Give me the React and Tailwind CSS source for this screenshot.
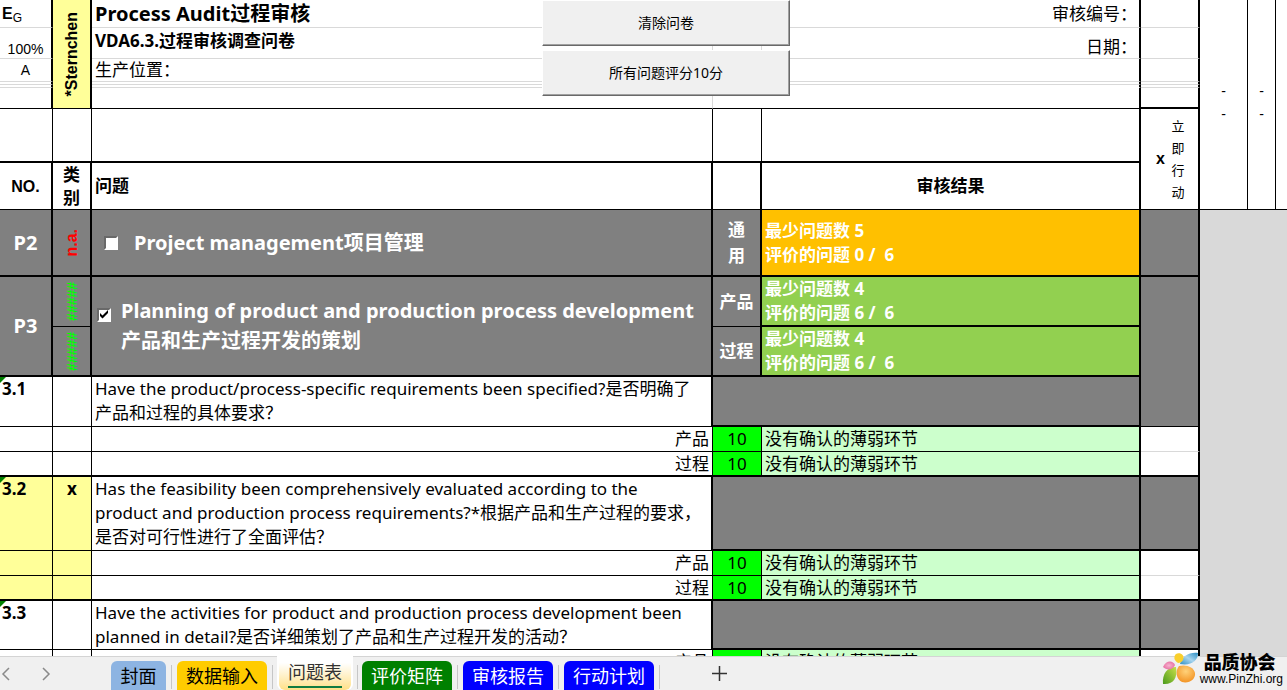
import React, { useState } from 'react';

const latin = "font-['Liberation_Sans','Noto_Sans_CJK_SC',sans-serif]";

const dark = 'bg-[#808080] text-white border-black';

const sections = [
  {
    no: '3.1',
    star: false,
    height: 'h-[50px]',
    lines: ['Have the product/process-specific requirements been specified?是否明确了', '产品和过程的具体要求？'],
  },
  {
    no: '3.2',
    star: true,
    height: 'h-[74px]',
    lines: [
      'Has the feasibility been comprehensively evaluated according to the',
      'product and production process requirements?*根据产品和生产过程的要求，',
      '是否对可行性进行了全面评估？',
    ],
  },
  {
    no: '3.3',
    star: false,
    height: 'h-[49px]',
    lines: ['Have the activities for product and production process development been', 'planned in detail?是否详细策划了产品和生产过程开发的活动？'],
  },
];

const tabs = [
  { label: '封面', className: 'bg-[#8db4e2] text-black' },
  { label: '数据输入', className: 'bg-[#ffcc00] text-black' },
  { label: '问题表' },
  { label: '评价矩阵', className: 'bg-[#008000] text-white' },
  { label: '审核报告', className: 'bg-[#0000ff] text-white' },
  { label: '行动计划', className: 'bg-[#0000ff] text-white' },
];

const SheetButton = ({ children }) => (
  <button
    type="button"
    className="h-[46px] w-full border-t border-l border-r border-b border-t-white border-l-white border-r-[#696969] border-b-[#696969] bg-[#f0f0f0] text-sm text-black shadow-[inset_-1px_-1px_0_#a0a0a0]"
  >
    {children}
  </button>
);

const CheckBox = ({ label, defaultChecked }) => {
  const [checked, setChecked] = useState(defaultChecked);
  return (
    <span className="relative block size-[14px] shrink-0">
      <input
        type="checkbox"
        aria-label={label}
        checked={checked}
        onChange={() => setChecked(!checked)}
        className="block size-[14px] appearance-none border-2 border-t-[#696969] border-r-white border-b-white border-l-[#696969] bg-white"
      />
      {checked && (
        <svg className="pointer-events-none absolute inset-0" viewBox="0 0 14 14" fill="#000">
          <path d="M3 5v3l2.500 2.500L11 5V2L5.500 7.500z" />
        </svg>
      )}
    </span>
  );
};

const Vertical = ({ className, children }) => (
  <div className="flex items-center justify-center">
    <span className={`leading-4 font-bold whitespace-nowrap [writing-mode:vertical-rl] ${latin} ${className}`}>
      {children}
    </span>
  </div>
);

// row of light grid lines above the frozen header
const GridRow = ({ height, first, no, title, right, noLine }) => (
  <tr className={height}>
    <td className={`border-r-2 border-b border-r-black border-b-[#d9d9d9] ${latin}`}>{no}</td>
    {first && (
      <td rowSpan={6} className="border-r-2 border-b border-black bg-[#ffff99]">
        <Vertical className="rotate-180 text-base">*Sternchen</Vertical>
      </td>
    )}
    <td className="border-r border-b border-[#d9d9d9] pl-[3px] whitespace-nowrap">{title}</td>
    <td className={`border-r border-b border-r-[#d9d9d9] ${noLine ? 'border-b-white' : 'border-b-[#d9d9d9]'}`}></td>
    <td className={`border-r-2 border-b border-r-black pr-[2px] text-right ${noLine ? 'border-b-white' : 'border-b-[#d9d9d9]'}`}>{right}</td>
    <td className="border-r-2 border-b border-r-black border-b-[#d9d9d9]"></td>
    {first && (
      <>
        <td rowSpan={8} className="border-r border-b border-black align-top">
          <Dashes />
        </td>
        <td rowSpan={8} className="border-r border-b border-black align-top">
          <Dashes />
        </td>
        <td rowSpan={8} className="border-b border-black"></td>
      </>
    )}
  </tr>
);

const Dashes = () => (
  <div className={`flex flex-col pt-20 text-center text-sm leading-[23px] ${latin}`}>
    <span>-</span>
    <span>-</span>
  </div>
);

const SheetHead = () => (
  <thead className="bg-white text-left">
    <GridRow
      first
      height="h-7"
      no={<div className="pl-[2px] text-base leading-6 font-bold">E<sub className="text-xs font-normal">G</sub></div>}
      title={<h1 className="text-xl leading-6 font-bold">Process Audit过程审核</h1>}
      right={<div className="leading-[26px]">审核编号：</div>}
    />
    <GridRow
      height="h-[31px]"
      no={<div className="pt-3 text-center text-sm leading-[18px]">100%</div>}
      title={<h2 className="pb-1 text-[17px] leading-6 font-bold">VDA6.3.过程审核调查问卷</h2>}
      right={<div className="pt-2 leading-[22px]">日期：</div>}
    />
    <GridRow
      height="h-[23px]"
      no={<div className="text-center text-sm leading-4">A</div>}
      title={<div className="leading-[20px]">生产位置：</div>}
    />
    <GridRow height="h-[3px]" />
    <GridRow height="h-[3px]" noLine />
    <tr className="h-[21px]">
      <td className="border-r-2 border-b border-black"></td>
      <td className="border-r border-b border-r-[#d9d9d9] border-b-black"></td>
      <td className="border-b border-black"></td>
      <td className="border-r-2 border-b border-black"></td>
      <td className="border-r-2 border-b-2 border-black"></td>
    </tr>
    <tr className="h-[54px]">
      <td className="border-r border-b-2 border-black"></td>
      <td className="border-r border-b-2 border-black"></td>
      <td className="border-r border-b-2 border-black"></td>
      <td className="border-r border-b-2 border-black"></td>
      <td className="border-r-2 border-b-2 border-black"></td>
      <td rowSpan={2} className="border-r-2 border-b border-black">
        <div className="flex items-center justify-center gap-[6px] pl-[2px]">
          <span className={`text-base font-bold ${latin}`}>x</span>
          <span className="w-[14px] text-center text-[13px] leading-[22px]">立即行动</span>
        </div>
      </td>
    </tr>
    <tr className="h-[47px] font-bold">
      <th className={`border-r-2 border-b border-black pt-[2px] text-center text-base ${latin}`}>NO.</th>
      <th className="border-r-2 border-b border-black">
        <div className="mx-auto w-5 text-center leading-[23px]">类别</div>
      </th>
      <th className="border-r-2 border-b border-black pl-[3px]">问题</th>
      <th className="border-r-2 border-b border-black"></th>
      <th className="border-r-2 border-b border-black text-center">审核结果</th>
    </tr>
  </thead>
);

const Score = ({ min, rated }) => (
  <div className="h-12 pl-[3px] leading-6 whitespace-pre">
    最少问题数 {min}
    <br />
    评价的问题 {rated} /  6
  </div>
);

const Hashes = () => <Vertical className="text-sm text-[#00ff00]">#####</Vertical>;

const Filler = ({ rowSpan }) => <td rowSpan={rowSpan} colSpan={3}></td>;

const ProcessRows = () => (
  <>
    <tr className="h-[67px] font-bold">
      <td className={`${dark} border-r-2 border-b-2 text-center text-xl`}>P2</td>
      <td className={`${dark} border-r-2 border-b-2`}>
        <Vertical className="rotate-180 text-base text-[#ff0000]">n.a.</Vertical>
      </td>
      <td className={`${dark} border-r-2 border-b-2`}>
        <div className="flex items-center gap-4 pl-3 text-xl">
          <CheckBox label="Project management项目管理" />
          <span className="whitespace-nowrap">Project management项目管理</span>
        </div>
      </td>
      <td className={`${dark} border-r-2 border-b-2`}>
        <div className="mx-auto w-5 text-center leading-[26px]">通用</div>
      </td>
      <td className="border-r-2 border-b-2 border-black bg-[#ffc000] text-white">
        <Score min={5} rated={0} />
      </td>
      <td className={`${dark} border-r-2 border-b-2`}></td>
      <Filler />
    </tr>
    <tr className="h-[50px] font-bold">
      <td rowSpan={2} className={`${dark} border-r-2 border-b-2 text-center text-xl`}>P3</td>
      <td className={`${dark} border-r-2 border-b`}><Hashes /></td>
      <td rowSpan={2} className={`${dark} border-r-2 border-b-2`}>
        <div className="flex items-start gap-[10px] pl-[5px] text-xl leading-[30px]">
          <span className="pt-3">
            <CheckBox label="Planning of product and production process development" defaultChecked />
          </span>
          <span className="whitespace-nowrap">
            Planning of product and production process development
            <br />
            产品和生产过程开发的策划
          </span>
        </div>
      </td>
      <td className={`${dark} border-r-2 border-b text-center`}>产品</td>
      <td className="border-r-2 border-b-2 border-black bg-[#92d050] text-white">
        <Score min={4} rated={6} />
      </td>
      <td rowSpan={3} className={`${dark} border-r-2 border-b`}></td>
      <Filler rowSpan={2} />
    </tr>
    <tr className="h-[50px] font-bold">
      <td className={`${dark} border-r-2 border-b-2`}><Hashes /></td>
      <td className={`${dark} border-r-2 border-b-2 text-center`}>过程</td>
      <td className="border-r-2 border-b-2 border-black bg-[#92d050] text-white">
        <Score min={4} rated={6} />
      </td>
    </tr>
  </>
);

const RatingRow = ({ label, star, last }) => {
  const line = last ? 'border-b-2' : 'border-b';
  const mark = star ? 'bg-[#ffff99]' : 'bg-white';
  return (
    <tr className="h-[25px] leading-[22px]">
      <td className={`border-r border-black ${line} ${mark}`}></td>
      <td className={`border-r border-black ${line} ${mark}`}></td>
      <td className={`border-r border-black bg-white pr-[3px] text-right ${line}`}>{label}</td>
      <td className={`border-r border-black bg-[#00ff00] text-center ${line}`}>10</td>
      <td className={`border-r-2 border-black bg-[#ccffcc] pl-[3px] ${line}`}>没有确认的薄弱环节</td>
      <td className={`border-r-2 bg-white ${last ? 'border-b-2 border-black' : 'border-b border-r-black border-b-[#d9d9d9]'}`}></td>
      <Filler />
    </tr>
  );
};

const QuestionRows = ({ section, first }) => {
  const mark = section.star ? 'bg-[#ffff99]' : 'bg-white';
  return (
    <>
      <tr className={`align-top leading-6 ${section.height}`}>
        <td className={`relative border-r border-b border-black pl-[2px] font-bold ${mark}`}>
          <svg className="absolute top-0 left-0 size-[6px]" viewBox="0 0 6 6" fill="#008000">
            <path d="M0 0h6L0 6z" />
          </svg>
          {section.no}
        </td>
        <td className={`border-r border-b border-black text-center font-bold ${mark}`}>{section.star ? 'x' : ''}</td>
        <td className="border-r-2 border-b border-black bg-white pl-[3px] whitespace-nowrap">
          {section.lines.map((line) => (
            <div key={line}>{line}</div>
          ))}
        </td>
        <td colSpan={2} className="border-r-2 border-b-2 border-black bg-[#808080]"></td>
        {!first && <td className="border-r-2 border-b-2 border-black bg-[#808080]"></td>}
        <Filler />
      </tr>
      <RatingRow label="产品" star={section.star} />
      <RatingRow label="过程" star={section.star} last />
    </>
  );
};

const TabBar = () => (
  <footer className="flex h-[34px] shrink-0 items-stretch border-t border-[#d4d4d4] bg-[#f0f0f0]">
    <div className="flex w-[111px] items-center text-[#8a8a8a]">
      <button type="button" aria-label="上一个" className="w-3">
        <svg className="h-4 w-3" viewBox="0 0 12 16" fill="none" stroke="currentColor" strokeWidth="1.500">
          <path d="M9 2L3 8l6 6" />
        </svg>
      </button>
      <button type="button" aria-label="下一个" className="ml-7 w-3">
        <svg className="h-4 w-3" viewBox="0 0 12 16" fill="none" stroke="currentColor" strokeWidth="1.500">
          <path d="M3 2l6 6-6 6" />
        </svg>
      </button>
    </div>
    <nav className="flex text-lg">
      {tabs.map((tab) =>
        tab.className ? (
          <div key={tab.label} className="flex items-start pt-1">
            <button type="button" className={`h-[29px] min-w-[55px] rounded-t-md px-[9px] leading-6 whitespace-nowrap ${tab.className}`}>
              {tab.label}
            </button>
            <span className="mx-[5px] mt-1 h-6 w-px bg-[#c6c6c6]"></span>
          </div>
        ) : (
          <div key={tab.label} className="-mt-px mr-1 -ml-px flex">
            <div className="rounded-b-md bg-white px-[2px]">
              <button
                type="button"
                aria-current="page"
                className="h-[34px] rounded-md bg-linear-to-b from-white from-20% to-[#ffe085] px-[9px] leading-7 text-[#333333]"
              >
                <span className="block border-b-2 border-[#107c41]">{tab.label}</span>
              </button>
            </div>
            <span className="mt-[9px] ml-1 h-6 w-px bg-[#c6c6c6]"></span>
          </div>
        )
      )}
    </nav>
    <button type="button" aria-label="新建工作表" className="ml-[47px] self-center">
      <svg className="size-[15px]" viewBox="0 0 15 15" stroke="#333333" strokeWidth="1.500">
        <path d="M7.500 0v15M0 7.500h15" />
      </svg>
    </button>
  </footer>
);

const Logo = () => (
  <a href="#pinzhi" className="absolute right-1 bottom-1 flex items-end gap-[2px] text-black">
    <svg className="h-[34px] w-9" viewBox="0 0 36 34">
      <defs>
        <linearGradient id="green" x1="0" y1="1" x2="1" y2="0">
          <stop offset="0" stopColor="#4a9a1c" />
          <stop offset="1" stopColor="#c8e04a" />
        </linearGradient>
        <radialGradient id="orange" cx="0.5" cy="0.35" r="0.7">
          <stop offset="0" stopColor="#ffd27a" />
          <stop offset="1" stopColor="#f2901f" />
        </radialGradient>
        <linearGradient id="blue" x1="0" y1="1" x2="1" y2="0">
          <stop offset="0" stopColor="#2e8fc4" />
          <stop offset="0.5" stopColor="#a9d5ee" />
          <stop offset="1" stopColor="#2e8fc4" />
        </linearGradient>
        <radialGradient id="pink" cx="0.5" cy="0.5" r="0.6">
          <stop offset="0" stopColor="#f7b3d0" />
          <stop offset="1" stopColor="#e5679c" />
        </radialGradient>
      </defs>
      <path d="M14 15C5 15 0 22 1 32C11 33 16 26 14 15z" fill="url(#green)" />
      <path d="M17 14C13 19 14 27 20 30C27 32 34 27 33 21C32 15 24 12 17 14z" fill="url(#orange)" />
      <path d="M18 12C20 4 27 0 36 1C36 9 29 14 18 12z" fill="url(#blue)" />
      <path d="M16 11C11 8 12 4 14 2C18 0 23 3 21 8C20 10 18 11 16 11z" fill="#f9cf2c" />
      <path d="M13 13C11 8 4 8 1 15C5 19 11 18 13 13z" fill="url(#pink)" />
    </svg>
    <span className="flex flex-col">
      <span className="pl-1 text-lg leading-5 font-black">品质协会</span>
      <span className={`text-xs leading-[14px] ${latin}`}>www.PinZhi.org</span>
    </span>
  </a>
);

export default function App() {
  return (
    <div className="relative flex h-screen flex-col overflow-hidden bg-[#d9d9d9] font-['Noto_Sans','Noto_Sans_CJK_SC',sans-serif] text-[17px] text-black">
      <main className="relative min-h-0 flex-1 overflow-hidden">
        <table className="w-full table-fixed border-separate border-spacing-0">
          <colgroup>
            <col className="w-[53px]" />
            <col className="w-[39px]" />
            <col />
            <col className="w-[49px]" />
            <col className="w-[379px]" />
            <col className="w-[59px]" />
            <col className="w-12" />
            <col className="w-7" />
            <col className="w-[11px]" />
          </colgroup>
          <SheetHead />
          <tbody>
            <ProcessRows />
            {sections.map((section, index) => (
              <QuestionRows key={section.no} section={section} first={index === 0} />
            ))}
          </tbody>
        </table>

        {/* macro buttons float over the cells */}
        <div className="absolute top-0 left-[542px] flex w-[248px] flex-col gap-1">
          <SheetButton>清除问卷</SheetButton>
          <SheetButton>所有问题评分10分</SheetButton>
        </div>
      </main>
      <TabBar />
      <Logo />
    </div>
  );
}
